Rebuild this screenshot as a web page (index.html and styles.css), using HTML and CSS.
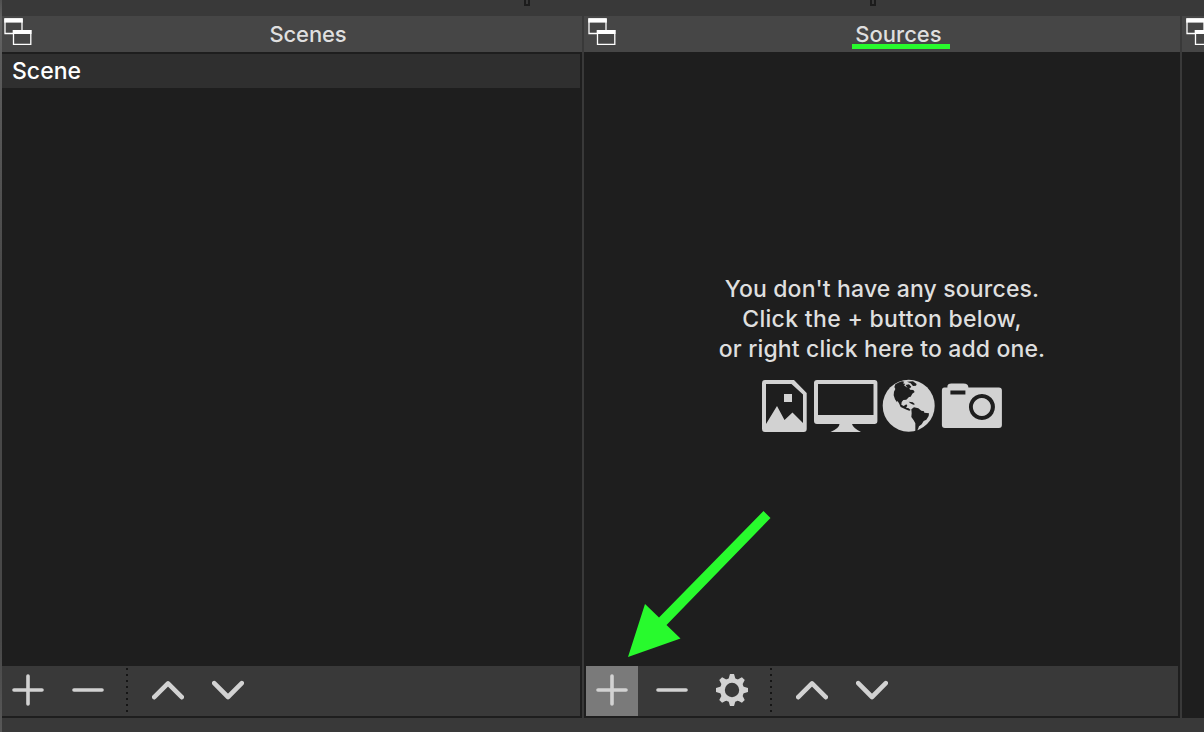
FILE: index.html
```html
<!DOCTYPE html>
<html lang="en">
<head>
<meta charset="utf-8">
<title>Scenes and Sources</title>
<link rel="stylesheet" href="styles.css">
</head>
<body>
<svg class="defs" width="0" height="0">
  <symbol id="float" viewBox="0 0 28 28">
    <path d="M1 1h17v14.500H1z" fill="#464646" stroke="#fff" stroke-width="1.3"/>
    <path d="M.3 .4h18.500v4.200H.3z" fill="#fff"/>
    <path d="M9.500 12.700h17.300v13.600H9.500z" fill="#464646" stroke="#fff" stroke-width="1.3"/>
    <path d="M8.800 12h18.700v4H8.800z" fill="#fff"/>
  </symbol>
  <symbol id="plus" viewBox="0 0 32 32"><path d="M2 16h28M16 2v28" class="line thin"/></symbol>
  <symbol id="minus" viewBox="0 0 32 32"><path d="M2 16h28" class="line thin"/></symbol>
  <symbol id="up" viewBox="0 0 32 32"><path d="M2.200 23.200 16 9.400l13.800 13.800" class="line"/></symbol>
  <symbol id="down" viewBox="0 0 32 32"><path d="M2.200 9.200 16 23 29.800 9.200" class="line"/></symbol>
  <symbol id="gear" viewBox="-16 -16 32 32">
    <g fill="#d2d2d2">
      <g id="teeth"><path d="M-3.500-11-2-16H2l1.500 5v22L2 16h-4l-1.500-5z"/><path d="M-11-3.500-16-2v4l5 1.500h22l5-1.500v-4l-5-1.500z"/></g>
      <use href="#teeth" transform="rotate(45)"/>
      <circle r="12"/>
    </g>
    <circle r="7.200" fill="#393939"/>
  </symbol>
</svg>
<div class="window">
  <div class="top"><i class="handle first"></i><i class="handle second"></i></div>
  <div class="docks">
    <section class="dock scenes">
      <header><svg class="float"><use href="#float"/></svg><h2>Scenes</h2></header>
      <div class="list"><div class="row"><span>Scene</span></div></div>
      <div class="toolbar">
        <button><svg><use href="#plus"/></svg></button>
        <button><svg><use href="#minus"/></svg></button>
        <i class="sep"></i>
        <button><svg><use href="#up"/></svg></button>
        <button><svg><use href="#down"/></svg></button>
      </div>
    </section>
    <section class="dock sources">
      <header><svg class="float"><use href="#float"/></svg><h2 class="marked">Sources</h2></header>
      <div class="empty">
        <p><span class="l1">You don't have any sources.</span><span class="l2">Click the + button below,</span><span class="l3">or right click here to add one.</span></p>
        <svg class="kinds" viewBox="0 0 242 54" fill="#d2d2d2">
          <path fill-rule="evenodd" d="M4 1h29l12.700 13v36q0 3-3 3H4q-3 0-3-3V4q0-3 3-3zM5 5v40L16 27l7.500 14 8-7.500 10.500 10.500V15.500L30.500 5zM23 15h8v8h-8z"/>
          <path fill-rule="evenodd" d="M56 1h57.400q3 0 3 3v38q0 3-3 3H91q1 4 9 8H69.500q9-4 9-8H56q-3 0-3-3V4q0-3 3-3zM57 5v31h55.500V5z"/>
          <circle cx="147.700" cy="26.700" r="26"/>
          <g transform="translate(114 -9) scale(.33333)" fill="#1e1e1e">
            <path d="M61 43q10-6 20-9l7 1-4 5 7 2-4 4 8 6 7-1 3 8 10 1 4 6-7 5-5 9-5 1-8 8-9 1-5 6-1 8 7 4 8-5 3 4-4 6 8 2 6 5-4 2-8-3-10-4-8-4-5-11-5-8-1 5-6-9-4-12 1-11 4-8-3-6z"/>
            <path d="M96 35l18-1 11 8-2 5-9 1-7-8zM92 45l10-2 7 7-4 5-10-5z"/>
            <path d="M101 95l12 2 7 6-5 1-9-4z"/>
            <path d="M109 118l8-6 13 3 9 7 8 2 1 4 14 2-1 8-7 11-8 4-6 10-8 6-3 8-5 8-3 1v-26l-5-9-7-10 1-11z"/>
          </g>
          <path fill-rule="evenodd" transform="translate(-.6 -.6)" d="M187 8q0-3 4-3h12q5 0 5 4h30.500q3 0 3 3v34.600q0 3-3 3h-54q-3 0-3-3V12q0-3 2.500-3H187zM190 12v4h15v-4zM221.500 15.500a13 13 0 1 0 .1 0zM221.500 19.500a9 9 0 1 1-.1 0z"/>
        </svg>
      </div>
      <div class="toolbar">
        <button class="active"><svg><use href="#plus"/></svg></button>
        <button><svg><use href="#minus"/></svg></button>
        <button><svg><use href="#gear"/></svg></button>
        <i class="sep"></i>
        <button><svg><use href="#up"/></svg></button>
        <button><svg><use href="#down"/></svg></button>
      </div>
    </section>
    <section class="dock next">
      <header><svg class="float"><use href="#float"/></svg></header>
    </section>
  </div>
  <svg class="arrow" viewBox="0 0 144 148"><path d="M135.500 1 142.500 8 38.500 115 52.500 128.500 0 147 17 94 31 107.500z" fill="#28fa2d"/></svg>
</div>
</body>
</html>
```
FILE: styles.css
```css
* { box-sizing: border-box; }
body { margin: 0; background: #393939; font-family: Inter, "Liberation Sans", sans-serif; }
.defs { position: absolute; }
.window { position: relative; width: 1204px; height: 732px; padding-left: 2px; overflow: hidden; background: linear-gradient(#505050, #646464 20px, #5c5c5c 60px, #484848 300px, #484848 640px, #585858) 0 0 / 2px 100% no-repeat #393939; }
.top { height: 16px; }
.handle { position: absolute; top: -2px; width: 6px; height: 8px; border: 2px solid #1c1c1c; }
.first { left: 524px; }
.second { left: 870px; }
.docks { display: grid; grid-template-columns: 580px 596px 22px; gap: 2px; height: 702px; }
.dock { display: flex; flex-direction: column; background: #1e1e1e; overflow: hidden; }
header { display: flex; flex: none; height: 36px; background: #464646; }
.float { flex: none; width: 28px; height: 28px; margin: 2px 0 0 2px; }
.sources .float { margin-left: 4px; }
.next .float { margin-left: 4px; }
h2 { flex: 1; margin: 0; font-size: 22px; font-weight: 450; line-height: 36px; letter-spacing: -.1px; color: #dfdfdf; text-align: center; }
.scenes h2 { padding-left: 2px; }
.marked { position: relative; padding-left: 1px; letter-spacing: 0; }
.marked::after { content: ""; position: absolute; left: 235.500px; top: 28px; width: 98px; height: 5px; background: #28fa2d; }
.list { flex: 1; padding: 2px 2px 0 0; }
.row { height: 34px; padding-left: 10px; background: #2f2f2f; color: #fff; font-size: 23px; font-weight: 500; line-height: 34px; }
.empty { flex: 1; display: flex; flex-direction: column; align-items: center; padding-top: 222px; }
.empty p { margin: 0; display: flex; flex-direction: column; align-items: center; color: #dfdfdf; font-size: 23px; font-weight: 450; line-height: 30px; white-space: nowrap; }
.l1 { letter-spacing: .15px; }
.l2 { letter-spacing: .32px; }
.l3 { letter-spacing: .14px; }
.kinds { width: 242px; height: 54px; margin-top: 15px; }
.toolbar { display: flex; flex: none; height: 50px; margin: 0 2px 2px 0; background: #393939; }
.sources .toolbar { margin-left: 2px; }
button { width: 52px; height: 50px; margin-right: 8px; padding: 0 0 2px; border: 0; background: none; display: flex; align-items: center; justify-content: center; }
button svg { width: 32px; height: 32px; }
.active { background: #7a7a7a; }
.line { fill: none; stroke: #d2d2d2; stroke-width: 4.600; stroke-linecap: round; stroke-linejoin: round; }
.thin { stroke-width: 3.600; }
.sep { width: 2px; height: 44px; margin: 2px 14px 0 4px; background: repeating-linear-gradient(#151515 0 2px, transparent 2px 6px); }
.arrow { position: absolute; left: 628px; top: 510px; width: 144px; height: 148px; }
```
